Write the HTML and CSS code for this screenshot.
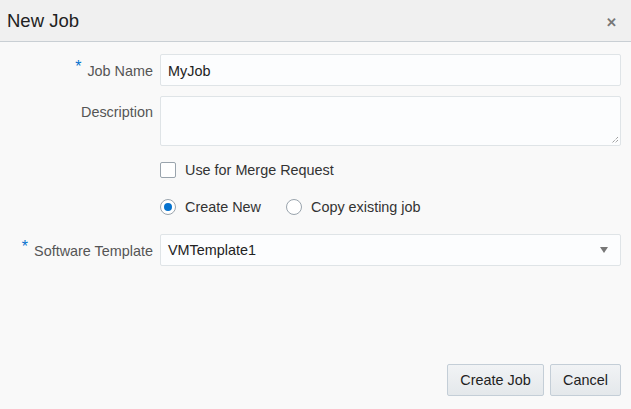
FILE: index.html
```html
<!DOCTYPE html>
<html>
<head>
<meta charset="utf-8">
<link rel="stylesheet" href="styles.css">
</head>
<body>
<div class="dialog">
  <div class="header">
    <h1 class="title">New Job</h1>
    <span class="close">&#x2715;</span>
  </div>
  <div class="content">
    <div class="form">
      <label class="label"><span class="req">*</span>Job Name</label>
      <div class="field"><div class="input">MyJob</div></div>

      <label class="label label-top">Description</label>
      <div class="field"><div class="textarea"><svg class="grip" width="8" height="8" viewBox="0 0 8 8"><path d="M7 1L1 7M7 4L4 7M7 7L7 7" stroke="#777" stroke-width="1" stroke-dasharray="1 1"/></svg></div></div>

      <div></div>
      <div class="field row-check"><span class="checkbox"></span><span class="opt">Use for Merge Request</span></div>

      <div></div>
      <div class="field row-radio">
        <span class="radio on"></span><span class="opt">Create New</span>
        <span class="radio second"></span><span class="opt">Copy existing job</span>
      </div>

      <label class="label row-select-label"><span class="req">*</span>Software Template</label>
      <div class="field row-select"><div class="select"><span>VMTemplate1</span><span class="arrow"></span></div></div>
    </div>
    <div class="footer">
      <button class="btn btn-create">Create Job</button>
      <button class="btn btn-cancel">Cancel</button>
    </div>
  </div>
</div>
</body>
</html>
```
FILE: styles.css
```css
* { box-sizing: border-box; }
html, body { margin: 0; padding: 0; }
body {
  width: 631px;
  height: 409px;
  overflow: hidden;
  font-family: "Liberation Sans", Arial, sans-serif;
  background: #f9f9f9;
}
.dialog { display: flex; flex-direction: column; height: 409px; }
.header {
  height: 42px;
  background: #f0f0f0;
  border-bottom: 1px solid #c9cfd4;
  display: flex;
  align-items: center;
  justify-content: space-between;
  padding: 0 14px 0 7px;
}
.title {
  margin: 0;
  font-size: 18.5px;
  font-weight: normal;
  color: #222;
  padding-top: 1px;
}
.close {
  font-size: 13px;
  color: #777;
  font-weight: bold;
  padding-top: 4px;
}
.content {
  flex: 1;
  display: flex;
  flex-direction: column;
  justify-content: space-between;
  padding: 12px 10px 13px 0;
}
.form {
  display: grid;
  grid-template-columns: 153px 1fr;
  column-gap: 7px;
  align-items: start;
  font-size: 14.4px;
}
.label {
  color: #555;
  text-align: right;
  height: 32px;
  line-height: 33px;
}
.label-top { margin-top: 10px; }
.req { color: #0572ce; font-size: 16px; margin-right: 6px; position: relative; top: -4px; }
.input {
  height: 32px;
  background: #fcfdfe;
  border: 1px solid #dfe4e7;
  border-radius: 2px;
  color: #222;
  line-height: 32px;
  padding-left: 7px;
}
.textarea {
  margin-top: 10px;
  height: 50px;
  background: #fcfdfe;
  border: 1px solid #dfe4e7;
  border-radius: 2px;
  position: relative;
}
.grip { position: absolute; right: 1px; bottom: 1px; }
.row-check {
  margin-top: 10px;
  height: 28px;
  display: flex;
  align-items: center;
}
.checkbox {
  width: 16px; height: 16px;
  border: 1px solid #9aa4ad;
  border-radius: 2px;
  background: #fff;
  margin-right: 9px;
}
.opt { color: #333; }
.row-radio {
  margin-top: 9px;
  height: 28px;
  display: flex;
  align-items: center;
}
.radio {
  width: 16px; height: 16px;
  border-radius: 50%;
  border: 1px solid #9aa4ad;
  background: #fff;
  margin-right: 9px;
  position: relative;
}
.radio.on::after {
  content: "";
  position: absolute;
  left: 3px; top: 3px;
  width: 8px; height: 8px;
  border-radius: 50%;
  background: #0572ce;
}
.radio.second { margin-left: 25px; }
.row-select-label { margin-top: 13px; }
.row-select { margin-top: 13px; }
.select {
  height: 32px;
  background: #fcfdfe;
  border: 1px solid #dfe4e7;
  border-radius: 2px;
  color: #222;
  line-height: 32px;
  padding: 0 11px 0 7px;
  display: flex;
  justify-content: space-between;
  align-items: center;
}
.arrow {
  width: 0; height: 0;
  border-left: 4px solid transparent;
  border-right: 4px solid transparent;
  border-top: 6px solid #777;
  margin-right: 1px;
}
.footer {
  display: flex;
  justify-content: flex-end;
  gap: 6px;
}
.btn {
  height: 32px;
  font-family: "Liberation Sans", Arial, sans-serif;
  font-size: 14.4px;
  color: #222;
  background: linear-gradient(#f1f3f5, #e4e8eb);
  border: 1px solid #c4ced7;
  border-radius: 2px;
  padding: 0;
}
.btn-create { width: 97px; }
.btn-cancel { width: 71px; }
```
